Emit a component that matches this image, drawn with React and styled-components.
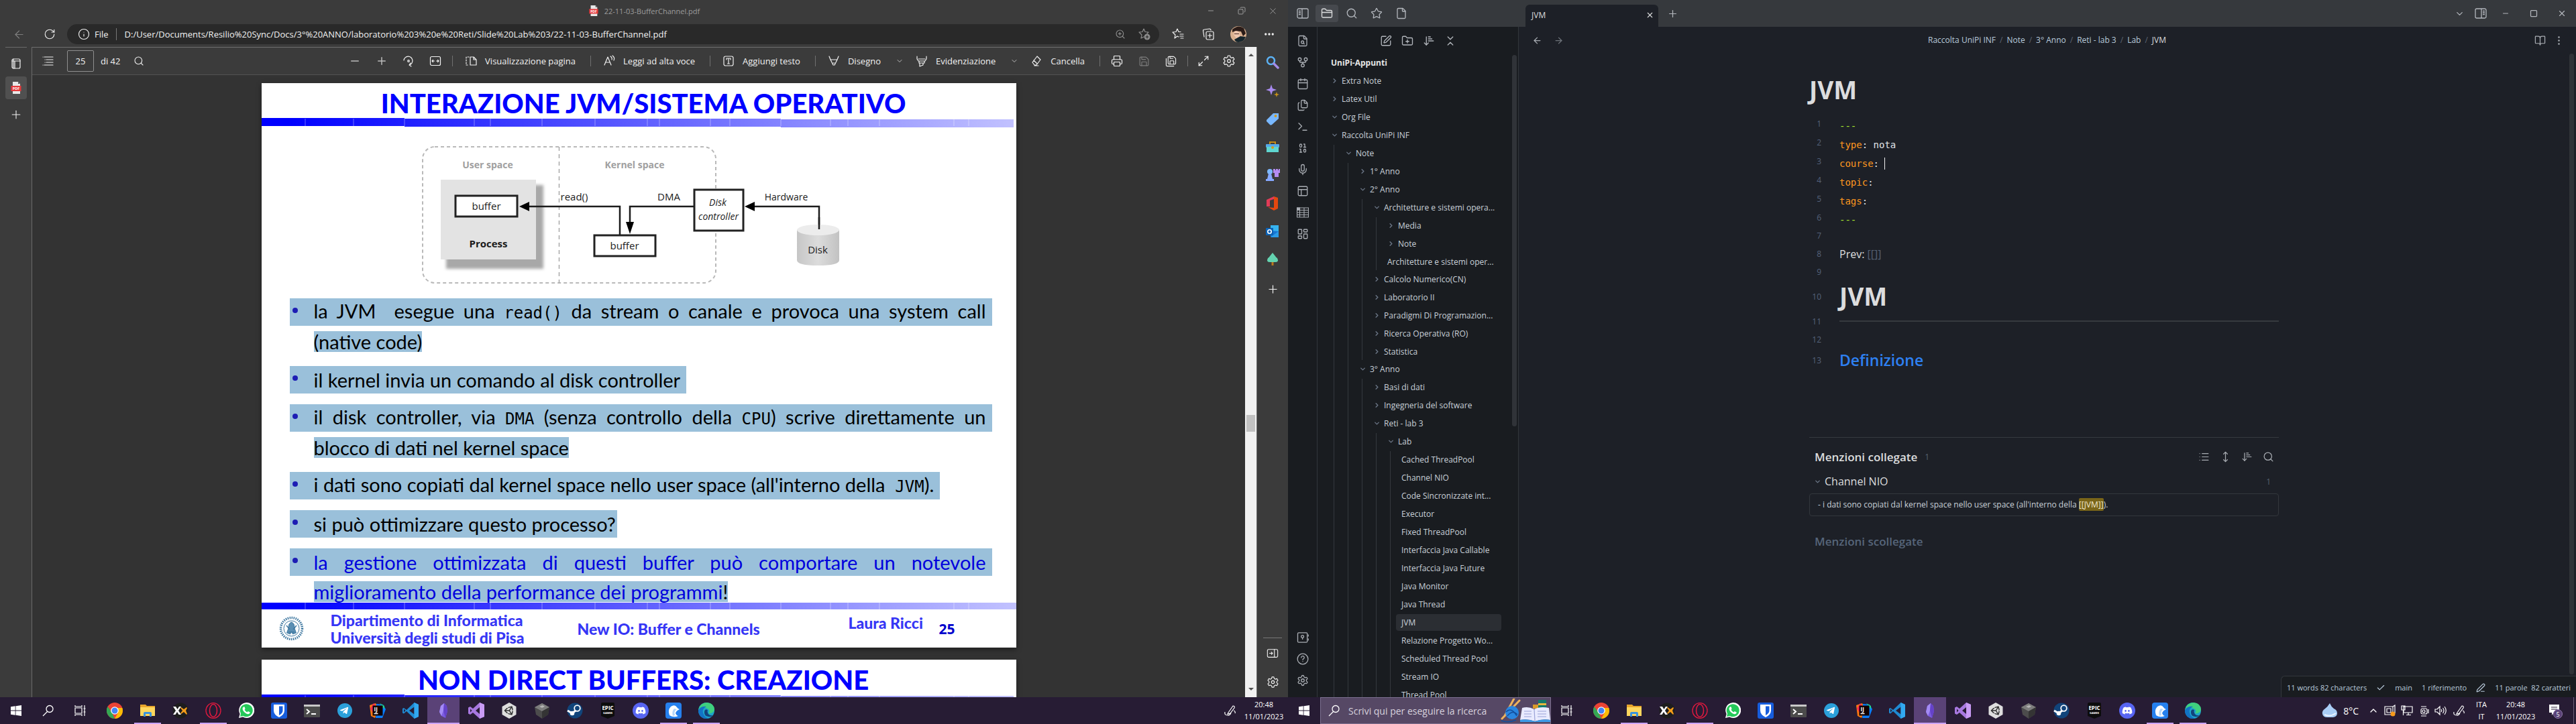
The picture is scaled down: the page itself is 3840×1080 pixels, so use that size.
import React from "react";
import styled, { createGlobalStyle } from "styled-components";
import {
  ArrowLeft, ArrowRight, Plus, X, Minus, Search, Star, File, FolderClosed, FileSearch, GitFork, Calendar,
  Files, Terminal, Binary, Mic, LayoutDashboard, Settings, FolderPlus, ArrowDownNarrowWide,
  ChevronsDownUp, ChevronDown, ChevronRight, ChevronUp, BookOpen, List, MoveVertical, Check, PenLine, SquarePen,
  RotateCw, Info, ZoomIn, Ellipsis, EllipsisVertical, Printer, Save, SaveAll, Maximize2, Square, Copy,
} from "lucide-react";
import { FaTelegramPlane, FaDiscord, FaUnity } from "react-icons/fa";

const ui = '"Open Sans", "Noto Sans", sans-serif';
const slide = 'Lato, "Open Sans", sans-serif';
const mono = '"DejaVu Sans Mono", "Liberation Mono", monospace';

const GlobalStyle = createGlobalStyle`
  * { box-sizing: border-box; }
  body { margin: 0; background: #271c34; font-family: ${ui}; }
  button, input { font: inherit; color: inherit; }
  h1, h2, h3, p, ul, ol { margin: 0; padding: 0; }
  ul, ol { list-style: none; }
  svg { display: block; flex: none; }
`;

const Desktop = styled.main`
  display: grid;
  grid-template-columns: 1fr 1fr;
  height: 100vh;
  overflow: hidden;
`;

const Monitor = styled.section`
  display: flex;
  flex-direction: column;
  min-width: 0;
  min-height: 0;
`;

const IconButton = styled.button`
  display: flex;
  align-items: center;
  justify-content: center;
  flex: none;
  width: ${(p) => p.$w || 32}px;
  height: ${(p) => p.$h || p.$w || 32}px;
  padding: 0;
  border: 0;
  border-radius: ${(p) => p.$radius || 0}px;
  background: ${(p) => p.$bg || "transparent"};
  color: ${(p) => p.$color || "inherit"};
`;

const Spacer = styled.div`
  flex: 1;
`;

/* ---------- browser window ---------- */

const Browser = styled.div`
  flex: 1;
  min-height: 0;
  display: flex;
  flex-direction: column;
  background: #3b3b3b;
  color: #f2f2f2;
`;

const TitleBar = styled.header`
  display: grid;
  grid-template-columns: 1fr auto 1fr;
  align-items: center;
  height: 32px;
  color: #9b9b9b;
  font-size: 11px;
`;

const WindowTitle = styled.div`
  display: flex;
  align-items: center;
  gap: 8px;
`;

const WindowButtons = styled.div`
  display: flex;
  justify-content: flex-end;
`;

const AddressRow = styled.div`
  display: flex;
  align-items: center;
  height: 38px;
  padding: 0 6px;
`;

const AddressBar = styled.div`
  flex: 1;
  display: flex;
  align-items: center;
  height: 30px;
  margin: 0 5px 0 4px;
  padding: 0 4px 0 16px;
  border-radius: 15px;
  background: #292929;
  font-size: 13px;
  gap: 7px;
`;

const AddressInput = styled.input`
  flex: 1;
  min-width: 0;
  margin-left: 4px;
  padding: 0 0 0 12px;
  border: 0;
  border-left: 1px solid #777;
  background: transparent;
  outline: none;
`;

const AddressTools = styled.div`
  display: flex;
  color: #8d8d8d;
`;

const BrowserBody = styled.div`
  flex: 1;
  min-height: 0;
  display: flex;
`;

const TabStrip = styled.nav`
  width: 48px;
  display: flex;
  flex-direction: column;
  align-items: center;
  gap: 2px;
  border-right: 1px solid #6a6a6a;
  &::before {
    content: "";
    width: 32px;
    height: 1px;
    margin-bottom: 5px;
    background: #6a6a6a;
  }
`;

const Viewer = styled.div`
  flex: 1;
  min-width: 0;
  display: flex;
  flex-direction: column;
  border-top: 1px solid #6f6f6f;
`;

const PdfToolbar = styled.div`
  display: flex;
  align-items: center;
  flex: none;
  height: 41px;
  padding: 0 4px;
  border-bottom: 1px solid #525252;
  font-size: 13px;
`;

const PageInput = styled.input`
  width: 40px;
  height: 32px;
  margin: 0 10px 0 8px;
  padding: 0;
  border: 1px solid #8f8f8f;
  border-radius: 2px;
  background: transparent;
  text-align: center;
`;

const Tool = styled.button`
  display: flex;
  align-items: center;
  gap: 11px;
  height: 32px;
  padding: 0 17px 0 12px;
  border: 0;
  background: transparent;
  white-space: nowrap;
`;

const Divider = styled.span`
  width: 1px;
  height: 16px;
  margin: 0 5px;
  background: #707070;
`;

const Canvas = styled.div`
  flex: 1;
  min-height: 0;
  overflow: hidden;
  display: flex;
  flex-direction: column;
  align-items: center;
  gap: 18px;
  padding-top: 12px;
  background: #333333;
`;

const VScroll = styled.div`
  width: 18px;
  display: flex;
  flex-direction: column;
  align-items: center;
  justify-content: space-between;
  padding: 8px 0;
  border-right: 1px solid #6a6a6a;
  background: #f1f1f1;
  background-clip: padding-box;
`;

const Thumb = styled.span`
  width: 13px;
  height: 25px;
  margin-top: 152px;
  background: #c1c1c1;
`;

const SideBar = styled.aside`
  width: 46px;
  display: flex;
  flex-direction: column;
  align-items: center;
  padding: 2px 0;
`;

const SideRule = styled.span`
  width: 28px;
  height: 1px;
  margin-bottom: 2px;
  background: #777;
`;

/* ---------- slide ---------- */

const Sheet = styled.article`
  flex: none;
  width: 1125px;
  background: #fff;
  color: #000;
  font-family: ${slide};
  box-shadow: 0 3px 8px rgba(0, 0, 0, 0.4);
`;

const SlideTitle = styled.h1`
  height: 52px;
  padding: 6px 0 0 14px;
  text-align: center;
  font-size: 40px;
  line-height: 48px;
  font-weight: 900;
  color: #0000ff;
`;

const Bullets = styled.ul`
  display: flex;
  flex-direction: column;
  gap: 16px;
  padding: 0 36px 0 42px;
  font-size: 29px;
`;

const Bullet = styled.li`
  color: ${(p) => (p.$accent ? "#0000dd" : "#000")};
  &:last-child > p {
    margin-bottom: 0;
  }
`;

const FirstLine = styled.div`
  display: flex;
  align-items: center;
  height: 41px;
  width: ${(p) => (p.$full ? "auto" : "fit-content")};
  padding-right: ${(p) => (p.$tight ? 2 : 9)}px;
  background: #9ac0da;
  line-height: 41px;
  &::before {
    content: "";
    width: 8px;
    height: 8px;
    margin: 0 24px 5px 4px;
    border-radius: 50%;
    background: #1d1db4;
  }
  p {
    flex: 1;
    white-space: ${(p) => (p.$full ? "normal" : "nowrap")};
    text-align-last: ${(p) => (p.$full ? "justify" : "left")};
  }
`;

const NextLine = styled.p`
  width: fit-content;
  height: 31px;
  margin: 8px 0 5px 36px;
  background: #9ac0da;
  line-height: 31px;
`;

const Code = styled.code`
  font-family: ${mono};
  font-size: 24px;
`;

const Black = styled.span`
  color: #000;
`;

const SlideFooter = styled.footer`
  display: grid;
  grid-template-columns: 77px 368px 404px 135px 1fr;
  align-items: center;
  height: 57px;
  padding-left: 26px;
  font-size: 23px;
  line-height: 26px;
  font-weight: 900;
  color: #3636f5;
`;

const FooterRaised = styled.span`
  align-self: start;
  padding-top: 7px;
`;

const PageNumber = styled.span`
  font-family: ${ui};
  font-size: 21px;
  font-weight: 700;
  color: #0000cc;
`;

/* ---------- notes window ---------- */

const Notes = styled.div`
  flex: 1;
  min-height: 0;
  display: flex;
  flex-direction: column;
  background: #1d2027;
  color: #dcddde;
`;

const NotesTop = styled.header`
  display: flex;
  align-items: center;
  flex: none;
  height: 40px;
  background: #36393d;
  color: #b3b7bd;
`;

const SideTabs = styled.div`
  display: flex;
  align-items: center;
  gap: 3px;
  width: 343px;
  padding-left: 6px;
`;

const NoteTab = styled.div`
  align-self: flex-end;
  display: flex;
  align-items: center;
  justify-content: space-between;
  width: 198px;
  height: 33px;
  margin-left: 11px;
  padding: 0 2px 2px 9px;
  border-radius: 6px 6px 0 0;
  background: #1d2027;
  color: #dcddde;
  font-size: 12px;
`;

const NotesBody = styled.div`
  flex: 1;
  min-height: 0;
  display: flex;
`;

const Ribbon = styled.nav`
  width: 44px;
  display: flex;
  flex-direction: column;
  align-items: center;
  padding: 5px 0 9px;
  border-right: 1px solid #32363b;
  background: #191c20;
  color: #a9adb3;
`;

const Explorer = styled.aside`
  width: 300px;
  display: flex;
  flex-direction: column;
  border-right: 1px solid #32363b;
  background: #191c20;
`;

const ExplorerActions = styled.div`
  display: flex;
  justify-content: center;
  flex: none;
  height: 42px;
  padding-top: 5px;
  color: #b3b7bd;
`;

const TreeFrame = styled.div`
  flex: 1;
  min-height: 0;
  display: flex;
  overflow: hidden;
`;

const Tree = styled.div`
  flex: 1;
  min-width: 0;
  padding: 0 16px 0 12px;
  font-size: 12px;
`;

const VaultName = styled.h2`
  padding-left: 8px;
  margin-bottom: 2px;
  font-size: 12px;
  line-height: 24px;
  font-weight: 700;
  color: #e6e6e6;
`;

const TreeRow = styled.button`
  display: flex;
  align-items: center;
  width: 100%;
  height: 25px;
  margin-bottom: 2px;
  padding: 0 2px 0 8px;
  border: 0;
  border-radius: 4px;
  background: ${(p) => (p.$active ? "#2b2e33" : "transparent")};
  color: #c9d1d9;
  text-align: left;
  white-space: nowrap;
  svg {
    margin-right: 5px;
    color: #6b7686;
  }
`;

const TreeGroup = styled.div`
  margin: 0 0 -1px 12px;
  padding-left: 8px;
  border-left: 1px solid #34383e;
`;

const ScrollTrack = styled.div`
  flex: none;
  width: ${(p) => p.$w}px;
  &::before {
    content: "";
    display: block;
    width: 7px;
    height: ${(p) => p.$size};
    border-radius: 4px;
    background: #303338;
  }
`;

const Editor = styled.section`
  flex: 1;
  min-width: 0;
  display: flex;
  flex-direction: column;
`;

const EditorHeader = styled.div`
  display: grid;
  grid-template-columns: 1fr auto 1fr;
  align-items: center;
  flex: none;
  height: 40px;
  padding: 0 12px 0 11px;
  color: #a9adb3;
`;

const HeaderSide = styled.div`
  display: flex;
  justify-content: ${(p) => (p.$end ? "flex-end" : "flex-start")};
`;

const Crumbs = styled.nav`
  display: flex;
  gap: 6px;
  font-size: 12px;
  line-height: 20px;
  color: #5d6673;
  a {
    color: #b9cbdc;
    text-decoration: none;
  }
  a[aria-current] {
    color: #dcddde;
  }
`;

const EditorScroll = styled.div`
  flex: 1;
  min-height: 0;
  display: flex;
`;

const EditorPane = styled.div`
  flex: 1;
  min-width: 0;
  display: flex;
  flex-direction: column;
`;

const Column = styled.div`
  flex: 1;
  width: 700px;
  max-width: 100%;
  margin: 0 auto;
  padding-top: 28px;
`;

const NoteTitle = styled.h1`
  margin-bottom: 10px;
  font-size: 37px;
  line-height: 52px;
  font-weight: 700;
`;

const Line = styled.div`
  display: grid;
  grid-template-columns: 18px 1fr;
  column-gap: 27px;
  align-items: center;
  height: ${(p) => p.$h || 27}px;
  font-size: 16px;
  &::before {
    content: "${(p) => p.$n}";
    text-align: right;
    font-size: 12px;
    color: #55627a;
  }
`;

const Yaml = styled.span`
  display: flex;
  align-items: center;
  padding-top: 7px;
  font-family: ${mono};
  font-size: 14px;
  white-space: pre;
  color: #e0e4e8;
  b {
    font-weight: 400;
    color: ${(p) => (p.$rule ? "#a6e22e" : "#fd971f")};
  }
`;

const Caret = styled.i`
  width: 1px;
  height: 18px;
  background: #f0f0f0;
`;

const Dim = styled.span`
  color: #566174;
`;

const NoteHeading = styled.h2`
  font-size: ${(p) => (p.$sub ? 23 : 37)}px;
  line-height: ${(p) => (p.$sub ? 32 : 44)}px;
  font-weight: ${(p) => (p.$sub ? 600 : 700)};
  color: ${(p) => (p.$sub ? "#2e80f2" : "#dcddde")};
`;

const Rule = styled.hr`
  width: 100%;
  height: 2px;
  margin: 0;
  border: 0;
  background: #363a3f;
`;

const Backlinks = styled.section`
  margin-top: 98px;
  border-top: 1px solid #363a3f;
`;

const BacklinkHead = styled.div`
  display: flex;
  align-items: center;
  height: 50px;
  margin-top: 3px;
  padding: 0 0 0 8px;
  gap: 11px;
  h3 {
    font-size: 17px;
    font-weight: 600;
  }
  small {
    flex: 1;
    font-size: 12px;
    color: #56606e;
  }
  div {
    display: flex;
    color: #a9adb3;
  }
`;

const BacklinkFile = styled.div`
  display: flex;
  align-items: center;
  height: 24px;
  padding: 0 12px 0 7px;
  gap: 5px;
  font-size: 16px;
  svg {
    color: #6b7686;
  }
  span {
    flex: 1;
  }
  small {
    font-size: 12px;
    color: #56606e;
  }
`;

const Match = styled.p`
  height: 34px;
  margin-top: 6px;
  padding-left: 12px;
  border: 1px solid #33373c;
  border-radius: 4px;
  font-size: 12px;
  line-height: 32px;
  color: #c9d1d9;
  mark {
    padding: 1px 0;
    border-radius: 2px;
    background: #7a6518;
    color: #f0e8cf;
  }
`;

const Unlinked = styled.h3`
  margin: 25px 0 0 8px;
  font-size: 17px;
  line-height: 26px;
  font-weight: 600;
  color: #56657a;
`;

const StatusBar = styled.footer`
  align-self: flex-end;
  display: flex;
  align-items: center;
  flex: none;
  gap: 14px;
  height: 32px;
  padding: 2px 8px 0;
  border: 1px solid #33373c;
  border-width: 1px 0 0 1px;
  border-radius: 6px 0 0 0;
  background: #191c20;
  font-size: 11px;
  color: #b9cbdc;
  white-space: nowrap;
`;

/* ---------- taskbar ---------- */

const Bar = styled.footer`
  display: flex;
  flex: none;
  height: 40px;
  background: #271c34;
  color: #fff;
`;

const Apps = styled.div`
  display: flex;
  gap: 1px;
  margin-left: 3px;
`;

const AppButton = styled.button`
  display: flex;
  flex-direction: column;
  align-items: center;
  justify-content: flex-end;
  width: 48px;
  height: 40px;
  padding: 0;
  border: 0;
  background: ${(p) => (p.$active ? "#5a4277" : "transparent")};
  &::after {
    content: "";
    width: ${(p) => (p.$active ? 48 : 40)}px;
    height: 2px;
    margin-top: 6px;
    background: ${(p) => (p.$open ? "#c9a2f6" : "transparent")};
  }
`;

const SearchBox = styled.label`
  display: flex;
  align-items: center;
  width: 344px;
  padding-left: 11px;
  gap: 12px;
  border: 1px solid #7d7090;
  background: #564865;
  input {
    flex: 1;
    min-width: 0;
    padding: 0;
    border: 0;
    outline: none;
    background: transparent;
    font-size: 14px;
  }
  input::placeholder {
    color: #d8d2de;
    opacity: 1;
  }
`;

const Weather = styled.button`
  display: flex;
  align-items: center;
  gap: 8px;
  padding: 0;
  margin-right: 9px;
  border: 0;
  background: transparent;
  font-size: 14px;
`;

const Stack = styled.button`
  width: ${(p) => p.$w}px;
  padding: 0 0 1px;
  border: 0;
  background: transparent;
  text-align: center;
  font-size: 11px;
  line-height: 18px;
  span {
    display: block;
  }
`;

const ShowDesktop = styled.span`
  width: 4px;
  margin-left: 4px;
  border-left: 1px solid #6c6178;
`;

/* ---------- drawings ---------- */

const Svg = ({ s = 24, children, vb = "0 0 24 24", ...rest }) => (
  <svg width={s} height={s} viewBox={vb} fill="none" {...rest}>{children}</svg>
);
const Stroke = (props) => (
  <Svg s={20} vb="0 0 20 20" stroke="currentColor" strokeWidth="1.2" strokeLinecap="round" strokeLinejoin="round" {...props} />
);

const PdfIcon = ({ s = 18 }) => (
  <Svg s={s} vb="0 0 18 18">
    <path d="M4 0h8l3 3v15H4z" fill="#e8e8e8" /><path d="M12 0v3h3z" fill="#555" />
    <path d="M1.500 6h15v8h-15z" fill="#e5393b" />
    <text x="9" y="12" textAnchor="middle" fontSize="5.500" fontWeight="700" fill="#fff" fontFamily="Open Sans, sans-serif">PDF</text>
  </Svg>
);

const Avatar = () => (
  <Svg s={24}>
    <circle cx="12" cy="12" r="12" fill="#d9b08f" />
    <path d="M3 5Q12-3 20 3l3 8-4 4-3-7-8-1-5 2z" fill="#2b1c18" />
    <path d="M6 8q5-2 8 2v6l-5 2-4-5z" fill="#edc6ae" />
    <path d="M6 20l9-5 8 1q-3 8-11 8-4 0-6-4z" fill="#17262d" />
    <path d="M6 11h7v1H6z" fill="#4b2e27" />
  </Svg>
);

const TocIcon = () => <Stroke><path d="M4 4h13M2 4h.1M7 8h10M5 8h.1M7 12h10M5 12h.1M4 16h13M2 16h.1" /></Stroke>;
const TabsIcon = () => <Stroke><rect x="4" y="3" width="12" height="14" rx="2" /><path d="M4 6h12M8 6v11M6 3v14" /></Stroke>;
const RotateIcon = () => <Stroke><path d="M3 9a6.500 6.500 0 1 1 8 7M11 16l2-3M11 16l3 2" /><circle cx="10" cy="10" r="1.300" /></Stroke>;
const FitIcon = () => <Stroke><rect x="2.500" y="3.500" width="15" height="13" rx="2" /><path d="M5 10h3.500M5 10l1.500-1.500M5 10l1.500 1.500M15 10h-3.500M15 10l-1.500-1.500M15 10l-1.500 1.500" /></Stroke>;
const PageViewIcon = () => <Stroke><path d="M9 4h5l4 4v8H9zM14 4v4h4" /><path d="M7 4H3v12h4" strokeDasharray="2 2" /></Stroke>;
const ReadIcon = () => <Stroke><path d="M3 16L8 4l5 12M5 12h6M12 3q3 2 2 5M15 2q4 3 2 7" /></Stroke>;
const TextIcon = () => <Stroke><rect x="3" y="3" width="14" height="14" rx="2.500" /><path d="M7 8V6h6v2M10 6v8M8.500 14h3" /></Stroke>;
const DrawIcon = () => <Stroke><path d="M3 3l2 5 4 8h2l4-8 2-5M5 8h10M9 13h2" /></Stroke>;
const MarkerIcon = () => <Stroke><path d="M3 3v4l2 3h10l2-3V3M5 7h10M6 10v3h8v-3M7 13v5l5-2v-3" /></Stroke>;
const EraserIcon = () => <Stroke><path d="M11 3l5 5-6 8H7l-3-4zM6 9l5 5M7 17h6" /></Stroke>;
const GearIcon = ({ s = 20 }) => (
  <Stroke s={s}><path d="M8.500 2h3l.6 2.400 1.800 1 2.400-.8 1.600 2.700-1.800 1.700v2l1.800 1.700-1.600 2.700-2.400-.7-1.800 1-.6 2.300h-3l-.6-2.300-1.800-1-2.400.7-1.600-2.700L3.900 11V9L2.100 7.300l1.600-2.700 2.400.8 1.800-1z" /><circle cx="10" cy="10" r="2.300" /></Stroke>
);
const FavIcon = () => <Stroke><path d="M11 14l-2-1-4 3 1-5-4-4 5-.5L9 2l2 4.500h3M13 10h5M13 13h5M14 16h4" /></Stroke>;
const StarPlusIcon = () => <Stroke><path d="M9 14l-4 2 1-5-4-4 5-.5L9 2l2 4.500 5 .5-2 2" /><circle cx="14" cy="14" r="4.500" fill="currentColor" stroke="none" /><path d="M14 12v4M12 14h4" stroke="#292929" /></Stroke>;
const CollectIcon = () => <Stroke><path d="M4 14L2.500 5q0-2 2-2L12 2q2 0 2 2" /><rect x="7" y="6" width="11" height="12" rx="2" /><path d="M12.500 9v6M9.500 12h6" /></Stroke>;
const DockIcon = () => <Stroke s={18}><rect x="1.500" y="3" width="17" height="13" rx="2" /><path d="M13 3v13M5 9.500h5M8 7.500l2 2-2 2" /></Stroke>;

const sideIcons = {
  Cerca: <Svg s={20} vb="0 0 20 20"><circle cx="7.500" cy="7.500" r="5.500" stroke="#5cb2f5" strokeWidth="2.500" /><path d="M12 12l6 6" stroke="#a58ce8" strokeWidth="3.500" strokeLinecap="round" /></Svg>,
  Scopri: <Svg s={20} vb="0 0 20 20"><path d="M8 1l2 6 6 2-6 2-2 6-2-6-6-2 6-2z" fill="#a98bf0" /><path d="M16 12l1 3 3 1-3 1-1 3-1-3-3-1 3-1z" fill="#c89318" /></Svg>,
  Shopping: <Svg s={20} vb="0 0 20 20"><path d="M1 12L11 2h8v8L9 19q-2 1-3 0l-5-5z" fill="#79b8ff" /><circle cx="14.500" cy="6" r="2" fill="#d39a1d" /></Svg>,
  Strumenti: <Svg s={20} vb="0 0 20 20"><path d="M6 6V3h8v3" stroke="#c48a15" strokeWidth="2" /><rect x="0" y="6" width="20" height="5" rx="1" fill="#56a8e8" /><rect x="1" y="10" width="18" height="8" fill="#5fd6d0" /><circle cx="10" cy="11" r="2" fill="#d39a1d" /></Svg>,
  Giochi: <Svg s={22} vb="0 0 22 22"><circle cx="7" cy="6" r="4" fill="#7db8ff" /><path d="M5 9h4l2 8h2v3H1v-3h2z" fill="#86a8ff" /><path d="M12 2h3v2h1V2h3v2h1V2h2v6h-2v6h-6V8h-2z" fill="#b58cf2" /></Svg>,
  Office: <Svg s={22} vb="0 0 22 22"><path d="M2 6L13 1v4L7 7v9H2z" fill="#e23b57" /><path d="M13 1l6 2v16l-6 3-9-5 9 1z" fill="#e4480f" /></Svg>,
  Outlook: <Svg s={20} vb="0 0 20 20"><rect x="7" y="1" width="12" height="9" fill="#36b3ef" /><path d="M7 9l12 1v9H7z" fill="#1976d2" /><path d="M8 18l11-8v9H8z" fill="#2b9be8" /><rect x="0" y="5" width="11" height="11" rx="1" fill="#0b62b5" /><circle cx="5.500" cy="10.500" r="2.700" stroke="#fff" strokeWidth="1.600" /></Svg>,
  Etree: <Svg s={20} vb="0 0 20 20"><path d="M8.500 12h3v7h-3z" fill="#b9791d" /><path d="M10 0l4 5q1 2 3 3 3 6-3 6H6q-6 0-3-6 2-1 3-3z" fill="#64d3b0" /></Svg>,
};

const SlantedBar = ({ stepped }) => (
  <svg width="100%" height={stepped ? 14 : 11} viewBox={stepped ? "0 0 1125 14" : "0 0 1125 11"} preserveAspectRatio="none">
    <defs><linearGradient id="fade" gradientUnits="userSpaceOnUse" x1="40" x2="1125" y1="0" y2="0"><stop offset="0" stopColor="#0000ff" /><stop offset="1" stopColor="#c2c2ff" /></linearGradient></defs>
    {stepped
      ? <path d="M0 0h213v1h561v1h347v12H774v-1H213v-1H0z" fill="url(#fade)" />
      : <path d="M0 1h1125v10H0z" fill="url(#fade)" />}
    {[65, 137, 213, 317, 341, 418, 497, 575, 593, 669, 698, 774, 848, 874, 921, 1032, 1054].map((x) => (
      <path key={x} d={`M${x} 1v11`} stroke="#fff" strokeOpacity="0.4" strokeWidth="1" />
    ))}
  </svg>
);

const Diagram = () => (
  <svg width="100%" height="255" viewBox="0 66 1125 255" fontFamily="Open Sans, sans-serif" fontSize="15" textAnchor="middle" fill="#1b1b1b">
    <defs>
      <linearGradient id="disk" x1="0" x2="1" y1="0" y2="0"><stop offset="0" stopColor="#c6c6c6" /><stop offset=".5" stopColor="#dcdcdc" /><stop offset="1" stopColor="#c2c2c2" /></linearGradient>
      <filter id="soft"><feGaussianBlur stdDeviation="2" /></filter>
    </defs>
    <rect x="240" y="95" width="437" height="203" rx="18" fill="none" stroke="#b9b9b9" strokeWidth="2" strokeDasharray="5 4" />
    <path d="M443.500 95v203" stroke="#a9a9a9" strokeWidth="1.500" strokeDasharray="6 5" />
    <rect x="275" y="152" width="145" height="125" fill="#a8a8a8" filter="url(#soft)" />
    <rect x="267" y="144" width="142" height="119" fill="#e3e3e3" />
    <g fontSize="14" fontWeight="700" fill="#a0a0a0"><text x="337" y="127">User space</text><text x="556" y="127">Kernel space</text></g>
    <g fill="#fff" stroke="#222" strokeWidth="3">
      <rect x="289" y="168" width="92" height="31" /><rect x="496" y="227" width="91" height="31" /><rect x="645" y="159" width="73" height="61" />
    </g>
    <g fill="none" stroke="#1c1c1c" strokeWidth="2.500">
      <path d="M396 184H534V226" /><path d="M644 184H549V210" /><path d="M732 184H831V217" />
    </g>
    <path d="M384 184l15-7v14zM549 225l-6-18h12zM720 184l15-7v14z" fill="#000" />
    <path d="M798 219v45q0 8 31.500 8t31.500-8v-45z" fill="url(#disk)" /><ellipse cx="829.500" cy="219" rx="31.500" ry="8" fill="#ececec" />
    <path d="M831 200v18" stroke="#1c1c1c" strokeWidth="2.500" />
    <g fontWeight="500">
      <text x="335" y="189">buffer</text><text x="541" y="248">buffer</text>
      <text x="466" y="175">read()</text><text x="607" y="175">DMA</text><text x="782" y="175" fontSize="14">Hardware</text>
      <text x="829" y="254">Disk</text>
      <text x="680" y="183" fontStyle="italic" fontSize="14">Disk</text><text x="681" y="204" fontStyle="italic" fontSize="14">controller</text>
    </g>
    <text x="338" y="245" fontWeight="700">Process</text>
  </svg>
);

const Seal = () => (
  <svg width="37" height="37" viewBox="0 0 37 37" fill="none" stroke="#3f78a0">
    <circle cx="18.500" cy="18.500" r="16" strokeWidth="3.500" strokeDasharray="1.600 1.400" />
    <circle cx="18.500" cy="18.500" r="11.500" strokeWidth="1" />
    <path d="M18.500 9q5 2 4 8l3 8-5 2-2-4-2 4-5-2 3-8q-1-6 4-8z" fill="#5b8fb3" strokeWidth="1" />
    <path d="M11 14l5 6M26 14l-5 6M14 24h9" strokeWidth="1.500" />
  </svg>
);

const SidebarToggle = ({ right }) => (
  <Svg s={18} vb="0 0 18 18" stroke="currentColor" strokeWidth="1.300" transform={right ? "scale(-1 1)" : undefined}>
    <rect x="1" y="2" width="16" height="14" rx="2" /><path d="M8 2v14M3 5.500h3M3 8h3M3 10.500h3" />
  </Svg>
);
const LayoutIcon = () => <Svg s={18} stroke="currentColor" strokeWidth="1.750"><rect x="3" y="3" width="18" height="18" rx="2" /><path d="M3 9h18M9 9v12" /></Svg>;
const TableIcon = () => <Svg s={18} vb="0 0 18 18" stroke="currentColor" strokeWidth="1.100"><path d="M.5 2h17v14H.5zM.5 5.500h17M.5 9h17M.5 12.500h17M4.500 2v14M11 2v14" /><path d="M.5 2h4v3.500h-4z" fill="currentColor" /></Svg>;
const VaultIcon = () => <Svg s={18} stroke="currentColor" strokeWidth="1.750"><rect x="2" y="2.500" width="19" height="19" rx="2" /><circle cx="11.500" cy="10" r="2.500" /><path d="M11.500 12.500V16M23 6v4M23 14v4" /></Svg>;
const HelpIcon = () => <Svg s={18} stroke="currentColor" strokeWidth="1.750" strokeLinecap="round"><circle cx="12" cy="12" r="10.500" /><path d="M9 9.200a3 3 0 1 1 4.200 2.700q-1.200.6-1.200 1.800M12 17v.1" /></Svg>;

const WinLogo = () => <Svg s={16} vb="0 0 16 16"><path d="M0 2.300L6.700 1.300v6.300H0zM7.500 1.200L16 0v7.600H7.500zM0 8.400h6.700v6.300L0 13.700zM7.500 8.400H16V16l-8.500-1.200z" fill="#fff" /></Svg>;
const TaskView = () => <Svg s={18} vb="0 0 18 18" stroke="#fff" strokeWidth="1.200"><path d="M1 5h10v8H1zM1 1v2h10V1M1 17v-2h10v2M15 1v16M13.500 6h3M13.500 11h3" /></Svg>;
const Loupe = () => <Svg s={18} vb="0 0 18 18" stroke="#fff" strokeWidth="1.300"><circle cx="11" cy="6.500" r="5" /><path d="M7.500 10.500L1 17" /></Svg>;
const PenTray = () => <Svg s={18} vb="0 0 18 18" stroke="#fff" strokeWidth="1.200"><path d="M6 12L13 2q3 0 2 3L9 13l-4 1zM1 11q-1 5 4 5 4 0 5-4M14 9q3 1 2 4" /></Svg>;

const appIcons = {
  Chrome: <Svg><circle cx="12" cy="12" r="12" fill="#ea4335" /><path d="M1.600 6L8 15l4 9A12 12 0 0 1 1.600 6z" fill="#34a853" /><path d="M12 24l5-9-1-7h7.300A12 12 0 0 1 12 24z" fill="#fbbc05" /><circle cx="12" cy="12" r="5.800" fill="#fff" /><circle cx="12" cy="12" r="4.500" fill="#4285f4" /></Svg>,
  Explorer: <Svg><path d="M1 3h8l2 2h12v6H1z" fill="#e8a52b" /><path d="M1 7h22v13H1z" fill="#ffd75e" /><path d="M6 21v-5q0-2 2-2h8q2 0 2 2v5h-3v-4H9v4z" fill="#3b93dd" /></Svg>,
  XSplit: <Svg><circle cx="12" cy="12" r="11.500" fill="#1d1d1d" /><path d="M1 6h4l2.500 4L10 6h3l-4 6 4 6H9.500L7 14l-2.500 4H1l4-6z" fill="#fff" /><path d="M13 7l4 3 4-3 1 1-2 4 2 5-1 1-4-4-4 3-1-1 3-4-3-4z" fill="#f49b1a" /></Svg>,
  Opera: <Svg stroke="#e3193f"><ellipse cx="12" cy="12" rx="11" ry="11.300" strokeWidth="1.300" /><ellipse cx="12" cy="12" rx="5.500" ry="9.500" strokeWidth="1.500" /></Svg>,
  WhatsApp: <Svg><path d="M1 23l1.600-6A11.500 11.500 0 1 1 7 21.500z" fill="#fff" /><path d="M3 21l1-4.500A9.500 9.500 0 1 1 7.500 20z" fill="#25c95a" /><path d="M8 6.500c2-1 2 1.500 2.500 3l-1 1.200q1.300 2.600 4 3.800l1.200-1.500 3 1.500c0 2.500-2.500 3-4 2.500-4-1-8-6-7-9z" fill="#fff" /></Svg>,
  Bitwarden: <Svg><rect x="0" y="0" width="24" height="24" rx="3" fill="#175ddc" /><path d="M4 3h16v9q0 6-8 10-8-4-8-10z" fill="#fff" /><path d="M12 5.500h5.500V12q0 4-5.500 7z" fill="#175ddc" /></Svg>,
  Terminal: <Svg><rect x="0" y="3" width="24" height="19" rx="1" fill="#4b4b4b" /><path d="M0 3h24v3H0z" fill="#c9c9c9" /><path d="M4 10l4 3.500L4 17M11 17h7" stroke="#fff" strokeWidth="2" /></Svg>,
  Telegram: <Svg><circle cx="12" cy="12" r="11" fill="#2ba0da" /><FaTelegramPlane x="4" y="5" size={14} color="#fff" /></Svg>,
  IntelliJ: <Svg><path d="M0 4l9-3 4 9-5 13-6-3z" fill="#f97a12" /><path d="M1 9l5-8 6 7-6 9z" fill="#fe2857" /><path d="M10 2l10 1 4 7-5 13H9z" fill="#087cfa" /><path d="M15 1l7 4v5z" fill="#21d789" /><rect x="4.500" y="4.500" width="15" height="15" fill="#100" /><text x="6.500" y="12.500" fontSize="8" fontWeight="700" fill="#fff" fontFamily="Open Sans, sans-serif">IJ</text><path d="M6.500 16.500h6" stroke="#fff" strokeWidth="1.500" /></Svg>,
  VSCode: <Svg><path d="M17.500 0L24 3v18l-6.500 3L6 13l-4 3.500-2-1V9l2-1 4 3z" fill="#1f8ad2" /><path d="M17.500 6.500v11L10 12z" fill="#271c34" /><path d="M17.500 0L24 3v18l-6.500 3z" fill="#32a8f0" /><path d="M2 9.500v5L4.500 12z" fill="#271c34" /></Svg>,
  Obsidian: <Svg><path d="M13 1l4 4 1 8-3 10-6-3-3-6 2-9z" fill="#7c5ce0" /><path d="M13 1L8 5l-2 9 3 6 3-8z" fill="#a48bf5" /><path d="M13 1l-1 11 3 11 3-10-1-8z" fill="#6542c9" /></Svg>,
  VisualStudio: <Svg><path d="M17 0l7 3v18l-7 3-10-9-4 3-3-1.500v-9L3 6l4 3z" fill="#a878e0" /><path d="M17 0l7 3v18l-7 3z" fill="#c99bf5" /><path d="M17 7v10l-6-5zM3 9.500v5L5.500 12z" fill="#271c34" /></Svg>,
  UnityHub: <Svg><path d="M12 0l10.500 6v12L12 24 1.500 18V6z" fill="#dedede" /><FaUnity x="4" y="4" size={16} color="#2e2e2e" /></Svg>,
  Cube: <Svg><path d="M12 1l11 6-2 11-9 6-9-6L1 7z" fill="#4c4c4c" /><path d="M12 1l11 6-11 6L1 7z" fill="#7d7d7d" /><path d="M12 13v11l9-6 2-11z" fill="#343434" /><path d="M8 6l5-2 3 2-4 2z" fill="#b5b5b5" /></Svg>,
  Steam: <Svg><circle cx="12" cy="12" r="11.500" fill="#11447a" /><circle cx="15.500" cy="8.500" r="4.300" stroke="#fff" strokeWidth="1.800" /><circle cx="8" cy="16" r="3.300" fill="#fff" /><path d="M1 12l7 4 5-4" stroke="#fff" strokeWidth="3" /></Svg>,
  Epic: <Svg><path d="M2 2q0-2 2-2h16q2 0 2 2v18l-10 4-10-4z" fill="#0c0c0c" /><text x="12" y="11" textAnchor="middle" fontSize="8" fontWeight="700" fill="#fff" fontFamily="Open Sans, sans-serif">EPIC</text><text x="12" y="17" textAnchor="middle" fontSize="4" fontWeight="700" fill="#fff" fontFamily="Open Sans, sans-serif">GAMES</text></Svg>,
  Discord: <Svg><circle cx="12" cy="12" r="12" fill="#5865f2" /><FaDiscord x="4" y="4" size={16} color="#fff" /></Svg>,
  Bird: <Svg><rect width="24" height="24" rx="4" fill="#2680ee" /><path d="M6 19q-3-8 2-13 6-4 9 1 2 3 4 3-5 2-6 6 1 3 4 4-7 3-13-1z" fill="#fff" /><path d="M13 9q-4 4-2 11l3-1q-2-6 3-9z" fill="#b7d6f8" /></Svg>,
  Edge: <Svg><circle cx="12" cy="12" r="12" fill="#1ea4c9" /><path d="M0 11Q3 0 13 0q11 1 11 11-2 6-9 5 3-3 0-6-6-5-15 1z" fill="#3fd07e" /><path d="M0 11q4-6 12-5-8 4-4 12 3 6 9 5-14 4-17-9z" fill="#1273c5" /><path d="M9 13q-1 7 6 8 4 1 7-2-7 1-8-4-1-2 0-4-4-2-5 2z" fill="#12447d" /></Svg>,
};

const SearchArt = () => (
  <svg width="76" height="36" viewBox="0 0 76 36">
    <path d="M22 0L8 26M30 3L4 30" stroke="#f0b35c" strokeWidth="3" strokeLinecap="round" />
    <circle cx="19" cy="21" r="10" fill="#2a86e0" /><path d="M10 20q8-8 16 6M12 26q8-10 15-2M3 33q10 4 22-1" stroke="#134f9c" strokeWidth="1.500" fill="none" />
    <path d="M50 9h8v6h-8z" fill="#d99a2b" /><path d="M58 2h12v14H58z" fill="#147a6b" /><path d="M58 7h12v3H58z" fill="#e8b83e" />
    <path d="M34 14q9-3 18 2 9-5 22-2l2 18q-12-2-23 2-10-4-22-2z" fill="#e9ebff" /><path d="M31 32q12-2 22 2 11-4 23-2v3H31z" fill="#3d9be8" />
    <path d="M52 16l1 17M37 19h11M37 23h11M37 27h11M57 19h13M57 23h13M57 27h13" stroke="#9aa2d6" strokeWidth="1.200" />
  </svg>
);

/* ---------- data ---------- */

const appState = { Explorer: 1, Opera: 1, Obsidian: 2, Bird: 1, Edge: 1 };

const tree = [
  ["Extra Note", null],
  ["Latex Util", null],
  ["Org File", []],
  ["Raccolta UniPi INF", [
    ["Note", [
      ["1° Anno", null],
      ["2° Anno", [
        ["Architetture e sistemi opera...", [["Media", null], ["Note", null], "Architetture e sistemi oper..."]],
        ["Calcolo Numerico(CN)", null],
        ["Laboratorio II", null],
        ["Paradigmi Di Programazion...", null],
        ["Ricerca Operativa (RO)", null],
        ["Statistica", null],
      ]],
      ["3° Anno", [
        ["Basi di dati", null],
        ["Ingegneria del software", null],
        ["Reti - lab 3", [
          ["Lab", [
            "Cached ThreadPool", "Channel NIO", "Code Sincronizzate int...", "Executor", "Fixed ThreadPool",
            "Interfaccia Java Callable", "Interfaccia Java Future", "Java Monitor", "Java Thread", "JVM",
            "Relazione Progetto Wo...", "Scheduled Thread Pool", "Stream IO", "Thread Pool",
          ]],
        ]],
      ]],
    ]],
  ]],
];

/* ---------- components ---------- */

function Nodes({ items }) {
  return items.map((item) => {
    if (typeof item === "string") {
      return <TreeRow key={item} $active={item === "JVM"}>{item}</TreeRow>;
    }
    const [name, children] = item;
    const Chevron = children ? ChevronDown : ChevronRight;
    return (
      <React.Fragment key={name}>
        <TreeRow><Chevron size={11} strokeWidth={3} />{name}</TreeRow>
        {children && children.length > 0 && <TreeGroup><Nodes items={children} /></TreeGroup>}
      </React.Fragment>
    );
  });
}

function AppRow() {
  return (
    <Apps>
      {Object.entries(appIcons).map(([name, icon]) => (
        <AppButton key={name} aria-label={name} $open={!!appState[name]} $active={appState[name] === 2}>{icon}</AppButton>
      ))}
    </Apps>
  );
}

function Clock({ w }) {
  return <Stack $w={w}><span>20:48</span><span>11/01/2023</span></Stack>;
}

function BrowserWindow() {
  return (
    <Browser>
      <TitleBar>
        <span />
        <WindowTitle><PdfIcon s={16} />22-11-03-BufferChannel.pdf</WindowTitle>
        <WindowButtons>
          <IconButton $w={46} $h={32} aria-label="Riduci"><Minus size={12} strokeWidth={2} /></IconButton>
          <IconButton $w={46} $h={32} aria-label="Ripristina"><Copy size={12} strokeWidth={2} transform="scale(-1 1)" /></IconButton>
          <IconButton $w={46} $h={32} aria-label="Chiudi"><X size={15} strokeWidth={1.5} /></IconButton>
        </WindowButtons>
      </TitleBar>
      <AddressRow>
        <IconButton $w={45} $color="#7d7d7d" aria-label="Indietro"><ArrowLeft size={19} strokeWidth={1.5} /></IconButton>
        <IconButton $w={45} aria-label="Aggiorna"><RotateCw size={18} strokeWidth={1.5} /></IconButton>
        <AddressBar>
          <Info size={18} strokeWidth={1.5} />File
          <AddressInput aria-label="Indirizzo" readOnly value="D:/User/Documents/Resilio%20Sync/Docs/3°%20ANNO/laboratorio%203%20e%20Reti/Slide%20Lab%203/22-11-03-BufferChannel.pdf" />
          <AddressTools>
            <IconButton $w={36} $h={30} aria-label="Zoom"><ZoomIn size={16} strokeWidth={1.7} /></IconButton>
            <IconButton $w={36} $h={30} aria-label="Aggiungi ai preferiti"><StarPlusIcon /></IconButton>
          </AddressTools>
        </AddressBar>
        <IconButton $w={45} aria-label="Preferiti"><FavIcon /></IconButton>
        <IconButton $w={45} aria-label="Raccolte"><CollectIcon /></IconButton>
        <IconButton $w={46} aria-label="Profilo"><Avatar /></IconButton>
        <IconButton $w={45} aria-label="Altro"><Ellipsis size={18} strokeWidth={2.4} /></IconButton>
      </AddressRow>
      <BrowserBody>
        <TabStrip>
          <IconButton $w={32} $h={34} aria-label="Schede"><TabsIcon /></IconButton>
          <IconButton $w={32} $h={34} $bg="#505050" $radius={4} aria-label="Scheda PDF"><PdfIcon /></IconButton>
          <IconButton $w={32} $h={42} aria-label="Nuova scheda"><Plus size={20} strokeWidth={1.3} /></IconButton>
        </TabStrip>
        <Viewer>
          <PdfToolbar>
            <IconButton $w={40} aria-label="Sommario"><TocIcon /></IconButton>
            <PageInput aria-label="Pagina" readOnly value="25" />
            di 42
            <IconButton $w={55} $h={32} aria-label="Trova"><Search size={16} strokeWidth={1.6} /></IconButton>
            <Spacer />
            <IconButton $w={40} $color="#bdbdbd" aria-label="Rimpicciolisci"><Minus size={18} strokeWidth={2} /></IconButton>
            <IconButton $w={40} $color="#bdbdbd" aria-label="Ingrandisci"><Plus size={18} strokeWidth={2} /></IconButton>
            <IconButton $w={40} aria-label="Ruota"><RotateIcon /></IconButton>
            <IconButton $w={40} aria-label="Adatta"><FitIcon /></IconButton>
            <Divider />
            <Tool><PageViewIcon />Visualizzazione pagina</Tool>
            <Divider />
            <Tool><ReadIcon />Leggi ad alta voce</Tool>
            <Divider />
            <Tool><TextIcon />Aggiungi testo</Tool>
            <Divider />
            <Tool><DrawIcon />Disegno</Tool>
            <IconButton $w={22} $color="#bdbdbd" aria-label="Opzioni disegno"><ChevronDown size={12} /></IconButton>
            <Tool><MarkerIcon />Evidenziazione</Tool>
            <IconButton $w={22} $color="#bdbdbd" aria-label="Opzioni evidenziazione"><ChevronDown size={12} /></IconButton>
            <Tool><EraserIcon />Cancella</Tool>
            <Divider />
            <IconButton $w={40} aria-label="Stampa"><Printer size={18} strokeWidth={1.6} /></IconButton>
            <IconButton $w={40} $color="#7d7d7d" aria-label="Salva"><Save size={17} strokeWidth={1.6} /></IconButton>
            <IconButton $w={40} aria-label="Salva con nome"><SaveAll size={17} strokeWidth={1.6} /></IconButton>
            <Divider />
            <IconButton $w={36} aria-label="Schermo intero"><Maximize2 size={18} strokeWidth={1.6} /></IconButton>
            <IconButton $w={40} aria-label="Impostazioni"><GearIcon /></IconButton>
          </PdfToolbar>
          <Canvas>
            <Sheet>
              <SlideTitle>INTERAZIONE JVM/SISTEMA OPERATIVO</SlideTitle>
              <SlantedBar stepped />
              <Diagram />
              <Bullets>
                <Bullet>
                  <FirstLine $full><p>la JVM&nbsp; esegue una <Code>read()</Code> da stream o canale e provoca una system call</p></FirstLine>
                  <NextLine>(native code)</NextLine>
                </Bullet>
                <Bullet><FirstLine><p>il kernel invia un comando al disk controller</p></FirstLine></Bullet>
                <Bullet>
                  <FirstLine $full><p>il disk controller, via <Code>DMA</Code> (senza controllo della <Code>CPU</Code>) scrive direttamente un</p></FirstLine>
                  <NextLine>blocco di dati nel kernel space</NextLine>
                </Bullet>
                <Bullet><FirstLine><p>i dati sono copiati dal kernel space nello user space (all'interno della&nbsp; <Code>JVM</Code>).</p></FirstLine></Bullet>
                <Bullet><FirstLine $tight><p>si può ottimizzare questo processo?</p></FirstLine></Bullet>
                <Bullet $accent>
                  <FirstLine $full><p>la gestione ottimizzata di questi buffer può comportare un notevole</p></FirstLine>
                  <NextLine>miglioramento della performance dei programmi<Black>!</Black></NextLine>
                </Bullet>
              </Bullets>
              <SlantedBar />
              <SlideFooter>
                <Seal />
                <span>Dipartimento di Informatica<br />Università degli studi di Pisa</span>
                <span>New IO: Buffer e Channels</span>
                <FooterRaised>Laura Ricci</FooterRaised>
                <PageNumber>25</PageNumber>
              </SlideFooter>
            </Sheet>
            <Sheet>
              <SlideTitle>NON DIRECT BUFFERS: CREAZIONE</SlideTitle>
              <SlantedBar stepped />
            </Sheet>
          </Canvas>
        </Viewer>
        <VScroll>
          <Svg s={8} vb="0 0 8 8"><path d="M0 6l4-4 4 4z" fill="#505050" /></Svg>
          <Thumb />
          <Svg s={8} vb="0 0 8 8"><path d="M0 2l4 4 4-4z" fill="#505050" /></Svg>
        </VScroll>
        <SideBar>
          {Object.entries(sideIcons).map(([name, icon]) => (
            <IconButton key={name} $w={46} $h={42} aria-label={name}>{icon}</IconButton>
          ))}
          <IconButton $w={46} $h={46} aria-label="Aggiungi"><Plus size={19} strokeWidth={1.5} /></IconButton>
          <Spacer />
          <SideRule />
          <IconButton $w={46} $h={42} aria-label="Ancora"><DockIcon /></IconButton>
          <IconButton $w={46} $h={42} aria-label="Impostazioni barra"><GearIcon s={19} /></IconButton>
        </SideBar>
      </BrowserBody>
    </Browser>
  );
}

const thin = { size: 18, strokeWidth: 1.75 };
const small = { size: 17, strokeWidth: 1.75 };

function NotesWindow() {
  const ribbon = [FileSearch, GitFork, Calendar, Files, Terminal, Binary, Mic, LayoutIcon, TableIcon, LayoutDashboard];
  const names = ["Apri rapido", "Grafo", "Calendario", "Modelli", "Comandi", "Binario", "Registra", "Layout", "Tabella", "Pannelli"];
  return (
    <Notes>
      <NotesTop>
        <SideTabs>
          <IconButton aria-label="Barra laterale"><SidebarToggle /></IconButton>
          <IconButton $w={34} $h={26} $bg="#46494e" $radius={4} $color="#dcddde" aria-label="File"><FolderClosed {...thin} /></IconButton>
          <IconButton $w={34} aria-label="Cerca"><Search {...thin} /></IconButton>
          <IconButton $w={34} aria-label="Speciali"><Star {...thin} /></IconButton>
          <IconButton $w={34} aria-label="Nota"><File {...thin} /></IconButton>
        </SideTabs>
        <NoteTab>JVM<IconButton $w={22} aria-label="Chiudi scheda"><X size={13} /></IconButton></NoteTab>
        <IconButton $w={42} aria-label="Nuova scheda"><Plus {...small} /></IconButton>
        <Spacer />
        <IconButton aria-label="Schede"><ChevronDown size={15} /></IconButton>
        <IconButton aria-label="Pannello destro"><SidebarToggle right /></IconButton>
        <IconButton $w={42} aria-label="Riduci"><Minus size={12} /></IconButton>
        <IconButton $w={42} aria-label="Ingrandisci"><Square size={12} strokeWidth={2.5} /></IconButton>
        <IconButton $w={42} aria-label="Chiudi"><X size={14} /></IconButton>
      </NotesTop>
      <NotesBody>
        <Ribbon>
          {ribbon.map((Icon, i) => <IconButton key={names[i]} aria-label={names[i]}><Icon {...thin} /></IconButton>)}
          <Spacer />
          <IconButton aria-label="Vault"><VaultIcon /></IconButton>
          <IconButton aria-label="Aiuto"><HelpIcon /></IconButton>
          <IconButton aria-label="Impostazioni"><Settings {...thin} /></IconButton>
        </Ribbon>
        <Explorer>
          <ExplorerActions>
            <IconButton aria-label="Nuova nota"><SquarePen {...thin} /></IconButton>
            <IconButton aria-label="Nuova cartella"><FolderPlus {...thin} /></IconButton>
            <IconButton aria-label="Ordina"><ArrowDownNarrowWide {...thin} /></IconButton>
            <IconButton aria-label="Comprimi"><ChevronsDownUp {...thin} /></IconButton>
          </ExplorerActions>
          <TreeFrame>
            <Tree>
              <VaultName>UniPi-Appunti</VaultName>
              <Nodes items={tree} />
            </Tree>
            <ScrollTrack $w={9} $size="554px" />
          </TreeFrame>
        </Explorer>
        <Editor>
          <EditorHeader>
            <HeaderSide>
              <IconButton aria-label="Indietro"><ArrowLeft size={15} /></IconButton>
              <IconButton $color="#6f747b" aria-label="Avanti"><ArrowRight size={15} /></IconButton>
            </HeaderSide>
            <Crumbs>
              {["Raccolta UniPi INF", "Note", "3° Anno", "Reti - lab 3", "Lab"].map((c) => (
                <React.Fragment key={c}><a href="#note">{c}</a><span>/</span></React.Fragment>
              ))}
              <a href="#note" aria-current="page">JVM</a>
            </Crumbs>
            <HeaderSide $end>
              <IconButton $w={28} aria-label="Lettura"><BookOpen {...small} /></IconButton>
              <IconButton $w={28} aria-label="Altro"><EllipsisVertical {...small} /></IconButton>
            </HeaderSide>
          </EditorHeader>
          <EditorScroll>
            <EditorPane>
              <Column>
                <NoteTitle>JVM</NoteTitle>
                <Line $n="1" $h={28}><Yaml $rule><b>---</b></Yaml></Line>
                <Line $n="2" $h={28}><Yaml><b>type</b>: nota</Yaml></Line>
                <Line $n="3" $h={28}><Yaml><b>course</b>: <Caret /></Yaml></Line>
                <Line $n="4" $h={28}><Yaml><b>topic</b>:</Yaml></Line>
                <Line $n="5" $h={28}><Yaml><b>tags</b>:</Yaml></Line>
                <Line $n="6" $h={28}><Yaml $rule><b>---</b></Yaml></Line>
                <Line $n="7" />
                <Line $n="8"><span>Prev: <Dim>[[]]</Dim></span></Line>
                <Line $n="9" />
                <Line $n="10" $h={46}><NoteHeading>JVM</NoteHeading></Line>
                <Line $n="11" $h={28}><Rule /></Line>
                <Line $n="12" />
                <Line $n="13" $h={34}><NoteHeading $sub>Definizione</NoteHeading></Line>
                <Backlinks>
                  <BacklinkHead>
                    <h3>Menzioni collegate</h3><small>1</small>
                    <div>
                      <IconButton aria-label="Elenco"><List {...small} /></IconButton>
                      <IconButton aria-label="Contesto"><MoveVertical {...small} /></IconButton>
                      <IconButton aria-label="Ordina"><ArrowDownNarrowWide {...small} /></IconButton>
                      <IconButton aria-label="Cerca"><Search {...small} /></IconButton>
                    </div>
                  </BacklinkHead>
                  <BacklinkFile><ChevronDown size={11} strokeWidth={3} /><span>Channel NIO</span><small>1</small></BacklinkFile>
                  <Match>- i dati sono copiati dal kernel space nello user space (all'interno della <mark>[[JVM]]</mark>).</Match>
                  <Unlinked>Menzioni scollegate</Unlinked>
                </Backlinks>
              </Column>
            </EditorPane>
            <ScrollTrack $w={10} $size="926px" />
          </EditorScroll>
          <StatusBar>
            <span>11 words 82 characters</span>
            <Check size={14} />
            <span>main</span>
            <span>1 riferimento</span>
            <PenLine size={14} />
            <span>11 parole&nbsp; 82 caratteri</span>
          </StatusBar>
        </Editor>
      </NotesBody>
    </Notes>
  );
}

export default function App() {
  return (
    <>
      <GlobalStyle />
      <Desktop>
        <Monitor>
          <BrowserWindow />
          <Bar>
            <IconButton $w={48} $h={40} aria-label="Start"><WinLogo /></IconButton>
            <IconButton $w={48} $h={40} aria-label="Cerca"><Loupe /></IconButton>
            <IconButton $w={48} $h={40} aria-label="Attività"><TaskView /></IconButton>
            <AppRow />
            <Spacer />
            <IconButton $w={28} $h={40} aria-label="Penna"><PenTray /></IconButton>
            <Clock w={72} />
          </Bar>
        </Monitor>
        <Monitor>
          <NotesWindow />
          <Bar>
            <IconButton $w={48} $h={40} aria-label="Start"><WinLogo /></IconButton>
            <SearchBox>
              <Loupe />
              <input aria-label="Cerca" placeholder="Scrivi qui per eseguire la ricerca" />
              <SearchArt />
            </SearchBox>
            <IconButton $w={48} $h={40} aria-label="Attività"><TaskView /></IconButton>
            <AppRow />
            <Spacer />
            <Weather>
              <Svg><path d="M12 1q-3 5-7 8-5 3-4 8 1 5 7 5h9q6-1 6-6 0-5-5-7-4-3-6-8z" fill="#a9cdf5" /><path d="M4 18q8 4 17-2" stroke="#e9f3ff" strokeWidth="2" /></Svg>
              8°C
            </Weather>
            <IconButton $w={25} $h={40} aria-label="Icone nascoste"><ChevronUp size={16} /></IconButton>
            <IconButton $w={25} $h={40} aria-label="Grafica"><Svg s={18} vb="0 0 18 18" stroke="#fff" strokeWidth="1.200"><path d="M1 3h12v12H1zM4 6h6v6H4zM13 3l3-2v12" /><circle cx="13" cy="14" r="3.500" fill="#f79a1c" stroke="none" /></Svg></IconButton>
            <IconButton $w={25} $h={40} aria-label="Rete"><Svg s={18} vb="0 0 18 18" stroke="#fff" strokeWidth="1.200"><path d="M4 3h13v9H4zM1 2h5v6H1zM3.500 8v8M8 15.500h7M11 12v3" /></Svg></IconButton>
            <IconButton $w={25} $h={40} aria-label="Webcam"><Svg s={18} vb="0 0 18 18" stroke="#fff" strokeWidth="1.200"><rect x="5" y="6" width="9" height="8" rx="2" /><circle cx="9" cy="10" r="2" /><path d="M5 3h8M5 17h8M16 7v6" /></Svg></IconButton>
            <IconButton $w={25} $h={40} aria-label="Volume"><Svg s={18} vb="0 0 18 18" stroke="#fff" strokeWidth="1.200"><path d="M1 7h3l4-4v12l-4-4H1zM10 7q1.500 2 0 4M12.500 5q3 4 0 8M15 3q4.500 6 0 12" /></Svg></IconButton>
            <IconButton $w={32} $h={40} aria-label="Penna"><PenTray /></IconButton>
            <Stack $w={34}><span>ITA</span><span>IT</span></Stack>
            <Clock w={68} />
            <IconButton $w={48} $h={40} aria-label="Notifiche">
              <Svg><path d="M4 3h15v12h-8l-3 4v-4H4z" fill="#fff" /><path d="M7 7h9M7 10h9" stroke="#271c34" /><circle cx="17" cy="17" r="6.500" fill="#5a4277" stroke="#8f78aa" /><text x="17" y="20.500" textAnchor="middle" fontSize="9" fill="#fff" fontFamily="Open Sans, sans-serif">5</text></Svg>
            </IconButton>
            <ShowDesktop />
          </Bar>
        </Monitor>
      </Desktop>
    </>
  );
}
